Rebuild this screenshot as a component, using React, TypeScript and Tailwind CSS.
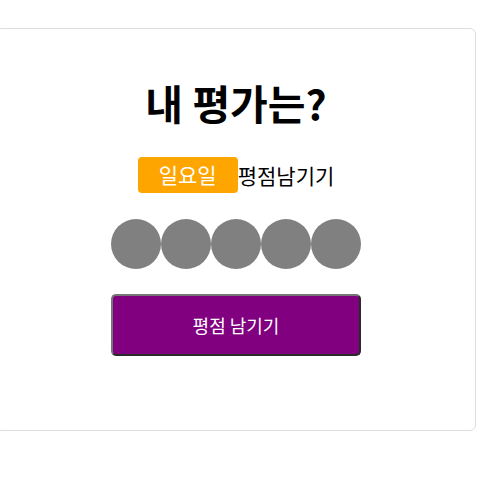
import { useState } from "react";

const FONT = "font-['Noto_Sans_CJK_KR','Noto_Sans',sans-serif]";

function RatingCard() {
  const [score, setScore] = useState(0);
  const stars = [1, 2, 3, 4, 5];

  return (
    <div
      className={`w-[480px] h-[403px] -ml-[4px] bg-white border border-[#dddddd] rounded-[6px] flex flex-col items-center pt-[49px] ${FONT}`}
    >
      <h1 className="h-[48px] leading-[48px] text-[41px] font-bold text-black">내 평가는?</h1>

      <div className="mt-[31px] flex items-center">
        <span className="w-[100px] h-[36px] bg-[#ffa500] rounded-[4px] text-white text-[21px] flex items-center justify-center">
          일요일
        </span>
        <span className="text-[21px] text-black leading-[36px]">평점남기기</span>
      </div>

      <div className="mt-[26px] flex">
        {stars.map((n) => (
          <button
            key={n}
            onClick={() => setScore(n)}
            className={`w-[50px] h-[50px] rounded-full ${n <= score ? "bg-[#ffa500]" : "bg-[#808080]"}`}
          />
        ))}
      </div>

      <button className="mt-[25px] w-[250px] h-[62px] bg-[#800080] text-white text-[18px] rounded-[5px] border-2 border-t-[#767676] border-l-[#767676] border-r-[#2a2a2a] border-b-[#2a2a2a]">
        평점 남기기
      </button>
    </div>
  );
}

export default function App() {
  return (
    <div className="w-[492px] h-[493px] bg-white pt-[28px] overflow-hidden">
      <RatingCard />
    </div>
  );
}
